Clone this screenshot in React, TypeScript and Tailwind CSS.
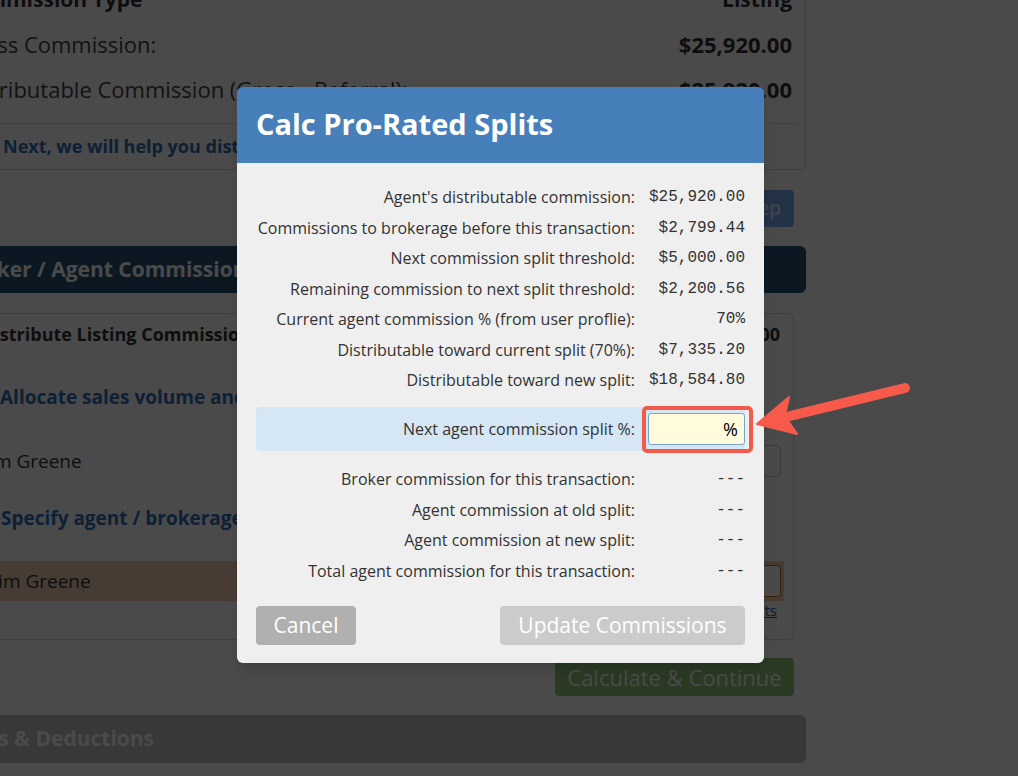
const STATS: [string, string][] = [
  ["Agent's distributable commission:", '$25,920.00'],
  ['Commissions to brokerage before this transaction:', '$2,799.44'],
  ['Next commission split threshold:', '$5,000.00'],
  ['Remaining commission to next split threshold:', '$2,200.56'],
  ['Current agent commission % (from user proflie):', '70%'],
  ['Distributable toward current split (70%):', '$7,335.20'],
  ['Distributable toward new split:', '$18,584.80'],
]

const RESULTS = [
  'Broker commission for this transaction:',
  'Agent commission at old split:',
  'Agent commission at new split:',
  'Total agent commission for this transaction:',
]

function StatRow({ label, value }: { label: string; value: string }) {
  return (
    <div className="grid h-[30.5px] grid-cols-[1fr_97px] items-center gap-x-[13px]">
      <span className="whitespace-nowrap text-right text-[16px] text-[#333]">{label}</span>
      <span className="whitespace-nowrap text-right font-['Liberation_Mono',monospace] text-[16px] text-[#333]">
        {value}
      </span>
    </div>
  )
}

function BackgroundPage() {
  return (
    <div className="ml-[-80px] mt-[-32px] flex w-[886px] flex-col">
      {/* Commission summary */}
      <div className="rounded-[6px] border border-[#d9d9d9] pb-[1px] pl-[38px] pr-[13px] pt-[8px]">
        <div className="flex h-[45px] items-center justify-between text-[21px] font-bold text-[#333]">
          <span>Commission Type</span>
          <span>Listing</span>
        </div>
        <div className="flex h-[45px] items-center justify-between text-[22px] text-[#444]">
          <span>Gross Commission:</span>
          <span className="font-bold text-[#333]">$25,920.00</span>
        </div>
        <div className="flex h-[45px] items-center justify-between text-[22px] text-[#444]">
          <span>Distributable Commission (Gross - Referral):</span>
          <span className="font-bold text-[#333]">$25,920.00</span>
        </div>
        <div className="mr-[-7px] mt-[11px] border-t border-[#dcdcdc]" />
        <div className="ml-[44px] flex h-[44px] items-center text-[18px] font-bold text-[#2e6fba]">
          Next, we will help you distribute the commission to agents and the brokerage.
        </div>
      </div>

      <div className="mr-[12px] mt-[20px] flex justify-end">
        <button className="h-[37px] rounded-[4px] bg-[#78aef0] px-[13px] text-[19px] font-semibold text-[#d6e9ff]">
          Next Step
        </button>
      </div>

      {/* Section bar */}
      <div className="mt-[19px] flex h-[47px] items-center rounded-[6px] bg-[#285477] pl-[40px] text-[21px] font-bold text-white">
        Broker / Agent Commissions
      </div>

      {/* Distribute card */}
      <div className="mr-[12px] mt-[20px] flex flex-col rounded-[6px] border border-[#d9d9d9] pb-[20px] pl-[60px]">
        <div className="flex h-[40px] items-center justify-between pr-[13px] text-[18px] font-bold text-[#333]">
          <span>Distribute Listing Commission</span>
          <span>$25,920.00</span>
        </div>
        <div className="ml-[19px] mt-[23px] flex h-[40px] items-center text-[19px] font-bold text-[#2e6fba]">
          Allocate sales volume and units
        </div>
        <div className="mt-[28px] flex h-[32px] items-center justify-between pl-[3px] pr-[12px] text-[19px] text-[#333]">
          <span>Jim Greene</span>
          <div className="h-[32px] w-[120px] rounded-[4px] border border-[#c5ccd4] bg-white" />
        </div>
        <div className="ml-[20px] mt-[21px] flex h-[40px] items-center text-[19px] font-bold text-[#2e6fba]">
          Specify agent / brokerage split
        </div>
        <div className="ml-[-12px] mr-[9px] mt-[23px] flex h-[40px] items-center justify-between bg-[#f0cdb1] pl-[24px] pr-[3px] text-[19px] text-[#333]">
          <span>Jim Greene</span>
          <div className="h-[32px] w-[120px] rounded-[4px] border border-[#c56a1a] bg-white" />
        </div>
        <div className="flex h-[18px] items-center justify-end pr-[16px] text-[15px] text-[#1f5fb0] underline">
          Calc Pro-Rated Splits
        </div>
      </div>

      <div className="mr-[12px] mt-[18px] flex justify-end">
        <button className="h-[38px] w-[239px] rounded-[4px] bg-[#90c878] text-[22px] text-white">
          Calculate &amp; Continue
        </button>
      </div>

      <div className="mt-[19px] flex h-[48px] items-center rounded-[6px] bg-[#c1c1c1] pl-[42px] text-[21px] font-bold text-white">
        Fees &amp; Deductions
      </div>
    </div>
  )
}

function Modal() {
  return (
    <div className="absolute left-[237px] top-[87px] w-[527px] overflow-hidden rounded-[6px] shadow-lg">
      <div className="flex h-[76px] items-center bg-[#467fb9] px-[19px] pb-[3px] text-[29px] font-bold text-white">
        Calc Pro-Rated Splits
      </div>
      <div className="bg-[#efefef] px-[19px] pb-[18px] pt-[19px]">
        {STATS.map(([label, value]) => (
          <StatRow key={label} label={label} value={value} />
        ))}

        <div className="mt-[11.5px] grid h-[44px] grid-cols-[1fr_97px] items-center gap-x-[13px] rounded-[4px] bg-[#d5e6f5]">
          <span className="whitespace-nowrap text-right text-[16px] text-[#333]">Next agent commission split %:</span>
          <div className="relative h-[32px]">
            <div className="flex h-full items-center justify-end rounded-[3px] border border-[#7ba3cc] bg-[#fffbdc] pr-[6px] text-[18px] text-black">
              %
            </div>
            <div className="absolute bottom-[-8px] left-[-6px] right-[-8px] top-[-7px] rounded-[5px] border-[4px] border-[#f45a4a]" />
          </div>
        </div>

        <div className="mt-[13px]">
          {RESULTS.map(label => (
            <StatRow key={label} label={label} value="---" />
          ))}
        </div>

        <div className="mt-[20px] flex justify-between">
          <button className="h-[39px] w-[100px] rounded-[4px] bg-[#b0b0b0] text-[21px] text-white">Cancel</button>
          <button className="h-[39px] w-[245px] rounded-[4px] bg-[#cbcbcb] text-[21px] text-white">
            Update Commissions
          </button>
        </div>
      </div>
    </div>
  )
}

export default function App() {
  return (
    <div className="relative h-[776px] w-full overflow-hidden bg-white font-['Open_Sans',sans-serif]">
      <BackgroundPage />
      {/* Dim overlay */}
      <div className="absolute inset-0 bg-black/[0.71]" />
      <Modal />
      {/* Annotation arrow */}
      <svg className="pointer-events-none absolute left-0 top-0" width="1018" height="776">
        <line x1="790" y1="416" x2="905" y2="388" stroke="#f75a4a" strokeWidth="10" strokeLinecap="round" />
        <polygon points="757,424 789,397 785,416 797,434" fill="#f75a4a" stroke="#f75a4a" strokeWidth="2" strokeLinejoin="round" />
      </svg>
    </div>
  )
}
